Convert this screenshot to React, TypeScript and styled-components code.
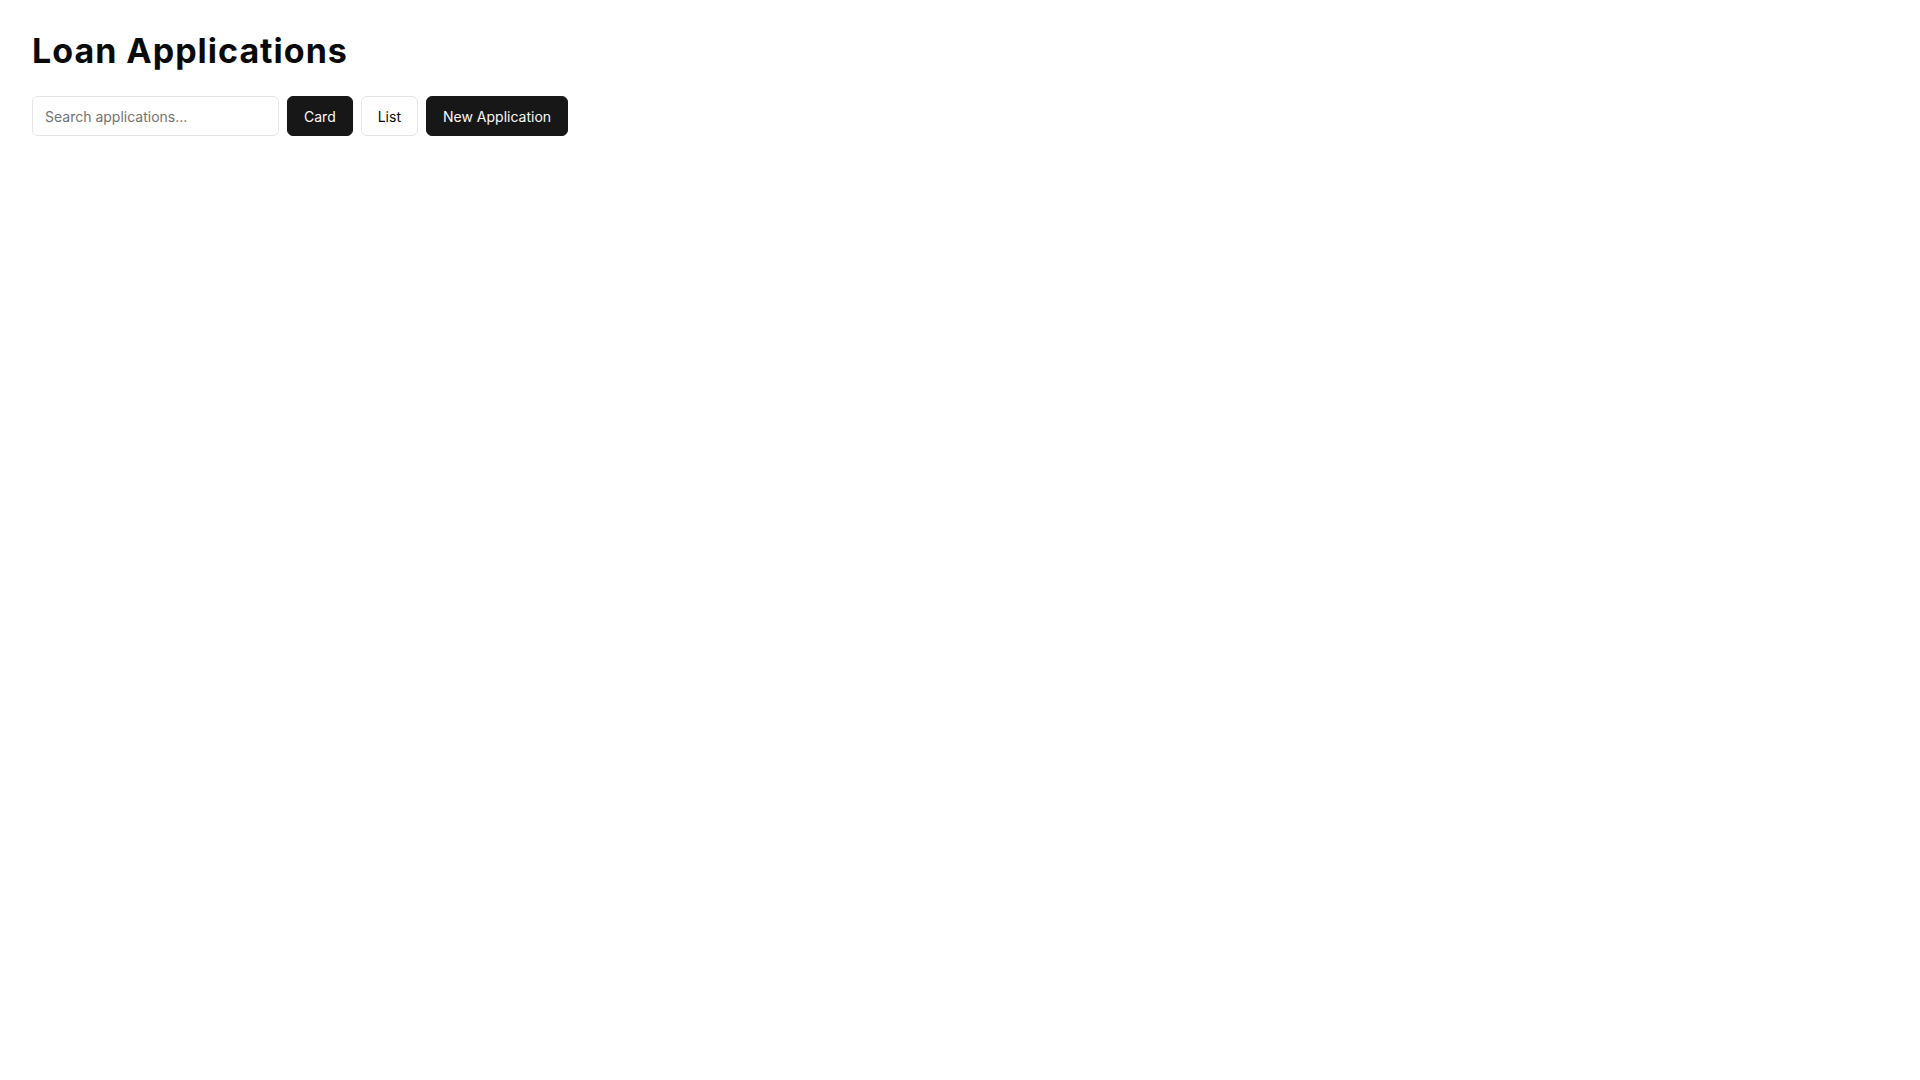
import React, { useState } from "react";
import styled, { createGlobalStyle } from "styled-components";

const GlobalStyle = createGlobalStyle`
  html, body {
    margin: 0;
    padding: 0;
    background: #ffffff;
  }
  body {
    font-family: Inter, "Noto Sans", "Liberation Sans", sans-serif;
    color: #0a0a0a;
  }
  * {
    box-sizing: border-box;
  }
`;

const Page = styled.main`
  padding: 32px;
`;

const Title = styled.h1`
  margin: 0 0 26px;
  font-size: 34px;
  line-height: 38px;
  font-weight: 700;
  letter-spacing: 1px;
  color: #0a0a0a;
`;

const Toolbar = styled.div`
  display: flex;
  align-items: center;
  gap: 8px;
`;

const Search = styled.input`
  width: 247px;
  height: 40px;
  padding: 0 12px;
  border: 1px solid #e5e5e5;
  border-radius: 6px;
  font-family: inherit;
  font-size: 14px;
  color: #0a0a0a;
  outline: none;

  &::placeholder {
    color: #737373;
  }
`;

const Button = styled.button<{ $active?: boolean }>`
  height: 40px;
  padding: 0 16px;
  border-radius: 6px;
  border: 1px solid ${(p) => (p.$active ? "#171717" : "#e5e5e5")};
  background: ${(p) => (p.$active ? "#171717" : "#ffffff")};
  color: ${(p) => (p.$active ? "#fafafa" : "#0a0a0a")};
  font-family: inherit;
  font-size: 14px;
  font-weight: 400;
  cursor: pointer;
`;

export default function App() {
  const [view, setView] = useState<"card" | "list">("card");
  const [query, setQuery] = useState("");

  return (
    <>
      <GlobalStyle />
      <Page>
        <Title>Loan Applications</Title>
        <Toolbar>
          <Search
            placeholder="Search applications..."
            value={query}
            onChange={(e) => setQuery(e.target.value)}
          />
          <Button $active={view === "card"} onClick={() => setView("card")}>
            Card
          </Button>
          <Button $active={view === "list"} onClick={() => setView("list")}>
            List
          </Button>
          <Button $active>New Application</Button>
        </Toolbar>
      </Page>
    </>
  );
}
